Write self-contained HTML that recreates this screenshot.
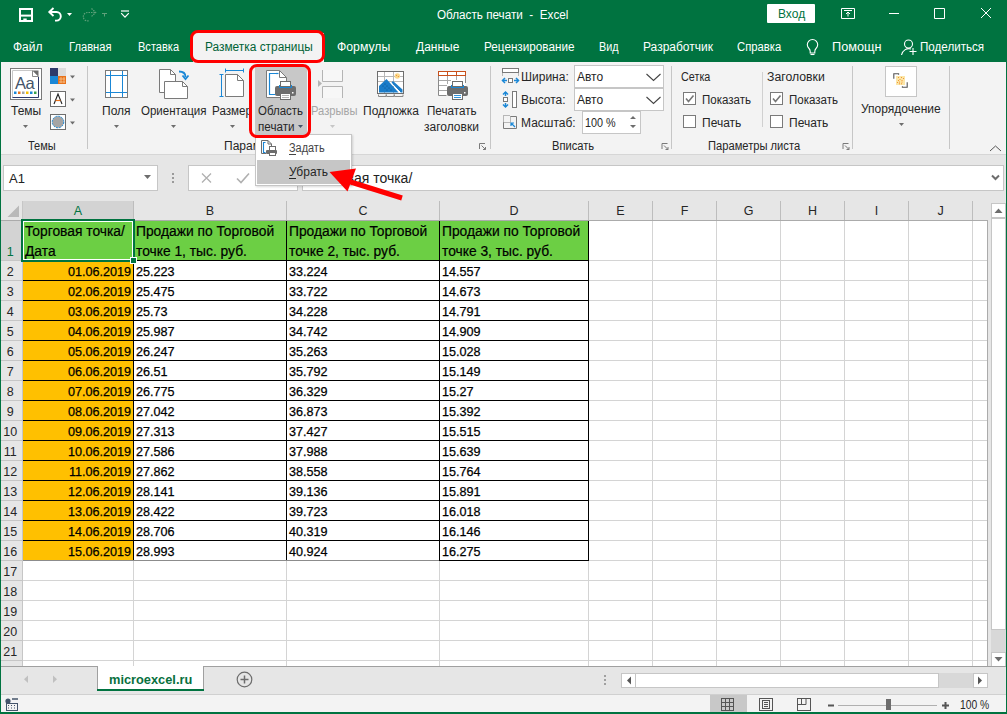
<!DOCTYPE html>
<html><head><meta charset="utf-8">
<style>
*{margin:0;padding:0;box-sizing:border-box}
html,body{width:1007px;height:714px;overflow:hidden;background:#fff}
body{position:relative;font-family:"Liberation Sans",sans-serif;font-size:12px;color:#262626}
.a{position:absolute}
.t{position:absolute;white-space:pre;line-height:1}
.w{color:#fff}
svg{position:absolute;overflow:visible}
</style></head><body>
<!-- title + tabs -->
<div class="a" style="left:0;top:0;width:1007px;height:62px;background:#007340"></div>
<!-- QAT -->
<svg style="left:0;top:0" width="140" height="30">
  <path d="M20 9h12v12h-12z" fill="none" stroke="#fff" stroke-width="2"/>
  <path d="M20 15.6h12" stroke="#fff" stroke-width="2"/>
  <rect x="23.3" y="18.5" width="3.4" height="3" fill="#fff"/>
  <path d="M49 12h7.5a4.3 4.3 0 0 1 0 8.6h-1.5" fill="none" stroke="#fff" stroke-width="1.9"/>
  <path d="M53.5 8l-4.2 4 4.2 4" fill="none" stroke="#fff" stroke-width="1.9"/>
  <path d="M67 13h5l-2.5 3z" fill="#fff"/>
  <g fill="none" stroke="#5fa07a" stroke-width="1.2" stroke-dasharray="1.5 1">
    <path d="M95 12.5h-7.5a4.2 4.2 0 0 0 0 8.4h2"/>
    <path d="M91.5 8.5l4.2 4-4.2 4"/>
  </g>
  <path d="M102 13.5h5M104.5 13.5v3" stroke="#5fa07a" stroke-width="1"/>
  <path d="M121 11h8" stroke="#fff" stroke-width="1.2"/>
  <path d="M121.2 13.2l3.8 4 3.8-4" fill="none" stroke="#fff" stroke-width="1.2"/>
</svg>
<div class="t w" style="left:437px;top:9px;font-size:12px;transform:scaleX(0.975);transform-origin:0 0">Область печати  -  Excel</div>
<!-- Вход -->
<div class="a" style="left:767px;top:4px;width:48px;height:19px;background:#fff;border-radius:1px"></div>
<div class="t" style="left:778px;top:8px;color:#007340">Вход</div>
<!-- window controls -->
<svg style="left:0;top:0" width="1007" height="30">
  <g fill="none" stroke="#fff" stroke-width="1">
    <path d="M841.5 8.5h13v10h-13z"/>
    <path d="M844 10.5h8"/>
    <path d="M848 16.5v-4.5M846 14l2-2 2 2"/>
    <path d="M889 13.5h10"/>
    <path d="M934.5 8.5h10v10h-10z"/>
    <path d="M981 8l10 10M991 8l-10 10"/>
  </g>
</svg>
<!-- tabs -->
<div class="t w" style="left:13px;top:41px">Файл</div>
<div class="t w" style="left:69px;top:41px;transform:scaleX(0.93);transform-origin:0 0">Главная</div>
<div class="t w" style="left:138px;top:41px;transform:scaleX(0.92);transform-origin:0 0">Вставка</div>
<div class="a" style="left:193px;top:33px;width:131px;height:29px;background:#f3f3f3"></div>
<div class="t" style="left:205px;top:41px;color:#006236;transform:scaleX(0.99);transform-origin:0 0">Разметка страницы</div>
<div class="t w" style="left:337px;top:41px;transform:scaleX(1.02);transform-origin:0 0">Формулы</div>
<div class="t w" style="left:416px;top:41px">Данные</div>
<div class="t w" style="left:484px;top:41px;transform:scaleX(0.976);transform-origin:0 0">Рецензирование</div>
<div class="t w" style="left:599px;top:41px;transform:scaleX(0.9);transform-origin:0 0">Вид</div>
<div class="t w" style="left:643px;top:41px">Разработчик</div>
<div class="t w" style="left:737px;top:41px;transform:scaleX(0.94);transform-origin:0 0">Справка</div>
<div class="t w" style="left:832px;top:41px;transform:scaleX(1.06);transform-origin:0 0">Помощн</div>
<div class="t w" style="left:920px;top:41px;transform:scaleX(0.967);transform-origin:0 0">Поделиться</div>
<svg style="left:0;top:30px" width="1007" height="32">
  <g fill="none" stroke="#fff" stroke-width="1.1">
    <path d="M809 18.5a5.2 5.2 0 1 1 7 0c-.8.8-1.2 1.8-1.2 3v1.5h-4.6v-1.5c0-1.2-.4-2.2-1.2-3z"/>
    <path d="M810.5 24.5h4"/>
    <circle cx="908.5" cy="14" r="4"/>
    <path d="M901.5 25a7.5 7.5 0 0 1 9.5-6"/>
    <path d="M913 18v7M909.5 21.5h7"/>
  </g>
</svg>

<!-- RIBBON -->
<div class="a" style="left:1px;top:62px;width:1005px;height:93px;background:#f3f3f3;border-bottom:1px solid #d6d6d6"></div>
<!-- group Темы -->
<svg style="left:0;top:0" width="90" height="155">
  <rect x="10.5" y="68.5" width="31" height="31" fill="#fff" stroke="#7a7a7a"/>
  <path d="M12.5 70.5h20l6 6v21h-26z" fill="#fff" stroke="#c8c8c8"/>
  <path d="M38.5 77v20.5h-26" fill="none" stroke="#2e3a6b"/>
  <path d="M32.5 70.5h6v6z" fill="#6d6d6d"/>
  <path d="M32.5 70.5v6h6" fill="none" stroke="#8a8a8a"/>
  <text x="15" y="88.5" font-family="Liberation Sans" font-size="16.5" fill="#44546a" letter-spacing="-.5">Aa</text>
  <rect x="14" y="91.5" width="2.5" height="2.5" fill="#1a87d6"/><rect x="18" y="91.5" width="2.5" height="2.5" fill="#e8721b"/>
  <rect x="22" y="91.5" width="2.5" height="2.5" fill="#a5a5a5"/><rect x="26" y="91.5" width="2.5" height="2.5" fill="#f5be00"/>
  <rect x="30" y="91.5" width="2.5" height="2.5" fill="#1a87d6"/><rect x="34" y="91.5" width="2.5" height="2.5" fill="#3aa24a"/>
  <!-- colors -->
  <rect x="50" y="68" width="8" height="8" fill="#2e3a6b"/><rect x="58" y="68" width="8" height="8" fill="#dcdcdc"/>
  <rect x="50" y="76" width="8" height="8" fill="#1a87d6"/><rect x="58" y="76" width="8" height="8" fill="#e8721b"/>
  <path d="M59 79h6M59 82h6M61 77v6M64 77v6" stroke="#f7c58f" stroke-width=".8"/>
  <!-- fonts -->
  <rect x="50.5" y="91.5" width="15" height="15" fill="#fff" stroke="#6d6d6d"/>
  <path d="M54 104l4-10 4 10" fill="none" stroke="#222" stroke-width="1.1"/>
  <path d="M55.5 100.5h5" stroke="#e8721b" stroke-width="1.2"/>
  <!-- effects -->
  <rect x="50.5" y="114.5" width="15" height="15" fill="#fff" stroke="#6d6d6d"/>
  <circle cx="58" cy="122" r="5.8" fill="#a5a5a5" stroke="#1a87d6" stroke-dasharray="2 1"/>
  <g fill="#6d6d6d">
    <path d="M70 75.5h5l-2.5 3z"/><path d="M70 98.5h5l-2.5 3z"/><path d="M70 121.5h5l-2.5 3z"/>
    <path d="M23 125h5l-2.5 3z"/>
  </g>
  <rect x="87" y="66" width="1" height="83" fill="#c6c6c6"/>
</svg>
<div class="t" style="left:11px;top:105px">Темы</div>
<div class="t" style="left:28px;top:140px;transform:scaleX(0.92);transform-origin:0 0">Темы</div>

<!-- group Параметры страницы -->
<svg style="left:0;top:0" width="500" height="155">
  <!-- Поля -->
  <rect x="105.5" y="70.5" width="22" height="27" fill="#fff" stroke="#7a7a7a"/>
  <path d="M110.5 71v26M122.5 71v26M106 75.5h21M106 92.5h21" stroke="#1a87d6"/>
  <!-- Ориентация -->
  <path d="M159.5 69.5h11l5 5v18h-16z" fill="#fff" stroke="#7a7a7a"/>
  <path d="M164.5 81.5h18l5 5v12h-23z" fill="#fff" stroke="#7a7a7a"/>
  <path d="M182.5 81.5v5h5" fill="none" stroke="#7a7a7a"/>
  <path d="M170.5 69.5v5h5" fill="none" stroke="#7a7a7a"/>
  <path d="M179 71.5c4 0 6.5 1.5 6.5 5.5" fill="none" stroke="#1a87d6" stroke-width="1.8"/>
  <path d="M182.5 75.5l3 3.5 3-3.5" fill="none" stroke="#1a87d6" stroke-width="1.8"/>
  <!-- Размер -->
  <path d="M225.5 74.5h12l6 6v16h-18z" fill="#fff" stroke="#7a7a7a"/>
  <path d="M237.5 74.5v6h6" fill="none" stroke="#7a7a7a"/>
  <path d="M225 70.5h19M225.5 68.5v4M243.5 68.5v4M221.5 74v23M219.5 74.5h4M219.5 96.5h4" stroke="#1a87d6"/>
  <g fill="#6d6d6d"><path d="M114 125h5l-2.5 3z"/><path d="M171 125h5l-2.5 3z"/><path d="M230 125h5l-2.5 3z"/></g>
</svg>
<div class="t" style="left:102px;top:105px">Поля</div>
<div class="t" style="left:141px;top:105px;transform:scaleX(0.96);transform-origin:0 0">Ориентация</div>
<div class="t" style="left:212px;top:105px;transform:scaleX(0.97);transform-origin:0 0">Размер</div>
<div class="t" style="left:224px;top:140px">Параметры страницы</div>
<!-- Область печати pressed -->
<div class="a" style="left:255px;top:67px;width:52px;height:67px;background:#c8c8c8"></div>
<svg style="left:0;top:0" width="500" height="155">
  <path d="M266.5 70.5h13l7 7v20h-20z" fill="#fff" stroke="#7a7a7a"/>
  <path d="M279.5 70.5v7h7" fill="none" stroke="#7a7a7a"/>
  <path d="M276 73.5h-6.5v21h6" fill="none" stroke="#1a87d6" stroke-width="1.2"/>
  <path d="M276 73.5h2.5" stroke="#1a87d6" stroke-width="1.2"/>
  <rect x="275" y="86" width="21" height="10" rx="2" fill="#6d6d6d"/>
  <rect x="279" y="85" width="13" height="3" fill="#1a87d6"/>
  <rect x="280.5" y="81.5" width="10" height="5" fill="#fff" stroke="#6d6d6d"/>
  <rect x="280.5" y="93.5" width="10" height="6" fill="#fff" stroke="#6d6d6d"/>
  <path d="M282 95.5h7M282 97.5h7" stroke="#a0a0a0" stroke-width=".8"/>
  <rect x="292" y="92" width="1.5" height="1.5" fill="#fff"/>
  <path d="M298 125h5l-2.5 3z" fill="#44546a"/>
  <!-- Разрывы disabled -->
  <rect x="323" y="70" width="19" height="11.5" fill="#f7f7f7"/>
  <rect x="323" y="87" width="19" height="11" fill="#f7f7f7"/>
  <path d="M322.5 70v11.5h20v-11.5M322.5 98v-11.5h20v11.5" fill="none" stroke="#b4b4b4"/>
  <path d="M318 80v7l4-3.5z" fill="#b4b4b4"/>
  <path d="M330 125h5l-2.5 3z" fill="#c6c6c6"/>
  <!-- Подложка -->
  <rect x="377.5" y="71.5" width="26" height="22" fill="#fff"/>
  <path d="M378 76.5h25M378 81.5h25M384.5 72v21M393.5 72v21" stroke="#b8b8b8"/>
  <rect x="377.5" y="71.5" width="26" height="22" fill="none" stroke="#6d6d6d"/>
  <path d="M378.5 94.5v2h7.5v-2M386.5 94.5v2h7.5v-2M394.5 94.5v2h8.5v-2" fill="none" stroke="#8a8a8a"/>
  <path d="M379 92.5v-6.5l7.5-7 12 13.5z" fill="#1a7cc9"/>
  <path d="M391.5 82.5l1.5-1.5 9.5 8.5v3h-2z" fill="#1a7cc9"/>
  <path d="M390 82l10.5 10.5" stroke="#fff" stroke-width="1"/>
  <g fill="#0d4f86"><circle cx="383" cy="86" r=".6"/><circle cx="385" cy="84" r=".6"/><circle cx="387" cy="86" r=".6"/><circle cx="385" cy="88" r=".6"/><circle cx="389" cy="88" r=".6"/><circle cx="391" cy="90" r=".6"/><circle cx="387" cy="90" r=".6"/></g>
  <circle cx="397.3" cy="76" r="2.7" fill="#fbd98a"/>
  <g fill="#e8721b"><circle cx="396.5" cy="75.3" r=".5"/><circle cx="398.3" cy="76.5" r=".5"/></g>
  <!-- Печатать заголовки -->
  <rect x="438.5" y="71.5" width="27" height="24" fill="#fff"/>
  <path d="M438.5 75v20.5h8M465.5 75v8M439 80.5h12M439 85.5h8M439 90.5h8M447.5 75v9M456.5 75v5" fill="none" stroke="#8a8a8a"/>
  <path d="M439 80.5h12M439 85.5h8M439 90.5h8M447.5 75v9M456.5 75v5" fill="none" stroke="#a8a8a8"/>
  <rect x="438.5" y="71.5" width="27" height="4" fill="#fff" stroke="#c8501b"/>
  <path d="M447.5 71.5v4M456.5 71.5v4" stroke="#c8501b"/>
  <rect x="447" y="86" width="21" height="10" rx="2" fill="#6d6d6d"/>
  <rect x="451" y="85" width="13" height="3" fill="#1a87d6"/>
  <rect x="452.5" y="81.5" width="10" height="5" fill="#fff" stroke="#6d6d6d"/>
  <rect x="452.5" y="93.5" width="10" height="6" fill="#fff" stroke="#6d6d6d"/>
  <path d="M454 95.5h7M454 97.5h7" stroke="#1a87d6" stroke-width=".9"/>
  <rect x="464" y="92" width="1.5" height="1.5" fill="#fff"/>
  <!-- launcher -->
  <path d="M479.5 149v-5.5h5.5M481.5 145.5l4 4M483 149.5h2.5v-2.5" fill="none" stroke="#7a7a7a"/>
  <rect x="490" y="66" width="1" height="83" fill="#c6c6c6"/>
</svg>
<div class="t" style="left:258px;top:105px;transform:scaleX(0.955);transform-origin:0 0">Область</div>
<div class="t" style="left:258px;top:121px;transform:scaleX(0.97);transform-origin:0 0">печати</div>
<div class="t" style="left:311px;top:105px;color:#a6a6a6;transform:scaleX(0.93);transform-origin:0 0">Разрывы</div>
<div class="t" style="left:363px;top:105px">Подложка</div>
<div class="t" style="left:427px;top:105px;transform:scaleX(0.97);transform-origin:0 0">Печатать</div>
<div class="t" style="left:424px;top:121px">заголовки</div>

<!-- group Вписать -->
<svg style="left:0;top:0" width="1007" height="155">
  <!-- width icon -->
  <rect x="502.5" y="68.5" width="16" height="4" fill="#fff" stroke="#7a7a7a"/>
  <path d="M502.5 72.5v3M518.5 72.5v3" stroke="#7a7a7a" stroke-dasharray="1 1"/>
  <path d="M503 80.5h4M514 80.5h4" stroke="#1a87d6" stroke-width="1.5"/>
  <path d="M505 78l-2.5 2.5 2.5 2.5M516 78l2.5 2.5-2.5 2.5" fill="none" stroke="#1a87d6" stroke-width="1.5"/>
  <rect x="508.5" y="78.5" width="4" height="4" fill="#fff" stroke="#7a7a7a"/>
  <!-- height icon -->
  <rect x="512.5" y="91.5" width="4" height="16" fill="#fff" stroke="#7a7a7a"/>
  <path d="M505.5 92v4M505.5 103v4" stroke="#1a87d6" stroke-width="1.5"/>
  <path d="M503 94.5l2.5-2.5 2.5 2.5M503 104.5l2.5 2.5 2.5-2.5" fill="none" stroke="#1a87d6" stroke-width="1.5"/>
  <rect x="503.5" y="97.5" width="4" height="4" fill="#fff" stroke="#7a7a7a"/>
  <!-- scale icon -->
  <path d="M503.5 122.5v-7h7" fill="none" stroke="#7a7a7a" stroke-dasharray="1 1"/>
  <path d="M503.5 122.5h7v-7" fill="none" stroke="#7a7a7a" stroke-dasharray="1 1"/>
  <path d="M510.5 116.5h6v12h-13v-6" fill="none" stroke="#7a7a7a"/>
  <path d="M515 127l-4-4M511 126v-3h3" fill="none" stroke="#1a87d6" stroke-width="1.2"/>
  <!-- combos -->
  <rect x="574.5" y="65.5" width="89" height="22" fill="#fff" stroke="#c6c6c6"/>
  <rect x="574.5" y="88.5" width="89" height="22" fill="#fff" stroke="#c6c6c6"/>
  <path d="M646.5 74l7 6.5 7-6.5M646.5 97l7 6.5 7-6.5" fill="none" stroke="#444" stroke-width="1.1"/>
  <rect x="582.5" y="111.5" width="58" height="22" fill="#fff" stroke="#c6c6c6"/>
  <path d="M630 119l3-3 3 3z M630 125l3 3 3-3z" fill="#6d6d6d"/>
  <path d="M662 149v-5.5h5.5M664 145.5l4 4M665.5 149.5h2.5v-2.5" fill="none" stroke="#7a7a7a"/>
  <rect x="671" y="66" width="1" height="83" fill="#c6c6c6"/>
  <!-- Параметры листа -->
  <rect x="683.5" y="92.5" width="12" height="12" fill="#fff" stroke="#7a7a7a"/>
  <path d="M686 98.5l2.5 3 5-6" fill="none" stroke="#777" stroke-width="1.6"/>
  <rect x="683.5" y="115.5" width="12" height="12" fill="#fff" stroke="#7a7a7a"/>
  <rect x="770.5" y="92.5" width="12" height="12" fill="#fff" stroke="#7a7a7a"/>
  <path d="M773 98.5l2.5 3 5-6" fill="none" stroke="#777" stroke-width="1.6"/>
  <rect x="770.5" y="115.5" width="12" height="12" fill="#fff" stroke="#7a7a7a"/>
  <rect x="762" y="72" width="1" height="55" fill="#d0d0d0"/>
  <path d="M843 149v-5.5h5.5M845 145.5l4 4M846.5 149.5h2.5v-2.5" fill="none" stroke="#7a7a7a"/>
  <rect x="852" y="66" width="1" height="83" fill="#c6c6c6"/>
  <!-- Упорядочение -->
  <rect x="885.5" y="66.5" width="31" height="30" fill="#fff" stroke="#c6c6c6"/>
  <path d="M893.8 78.8v-5h4.8v1M907.2 82.2v5h-4.8v-1" fill="none" stroke="#555" stroke-width="1.1"/>
  <rect x="896" y="76" width="9" height="9" fill="#fbe6a8"/>
  <g fill="#f08a24"><circle cx="898.5" cy="77.5" r=".55"/><circle cx="901.5" cy="77.5" r=".55"/><circle cx="903.5" cy="78.5" r=".55"/><circle cx="900" cy="79.5" r=".55"/><circle cx="898.5" cy="80.5" r=".55"/><circle cx="902" cy="80.5" r=".55"/><circle cx="899.5" cy="82" r=".55"/><circle cx="902" cy="82" r=".55"/><circle cx="897.5" cy="82.5" r=".55"/><circle cx="899.5" cy="83.8" r=".55"/><circle cx="901.5" cy="83.8" r=".55"/></g>
  <path d="M899 123h5l-2.5 3z" fill="#6d6d6d"/>
  <rect x="949" y="66" width="1" height="83" fill="#c6c6c6"/>
  <path d="M990 151l5.5-5 5.5 5" fill="none" stroke="#555" stroke-width="1"/>
</svg>
<div class="t" style="left:521px;top:71px">Ширина:</div>
<div class="t" style="left:521px;top:94px">Высота:</div>
<div class="t" style="left:521px;top:117px">Масштаб:</div>
<div class="t" style="left:577px;top:71px">Авто</div>
<div class="t" style="left:577px;top:94px">Авто</div>
<div class="t" style="left:585px;top:117px;transform:scaleX(.9);transform-origin:0 0">100 %</div>
<div class="t" style="left:552px;top:140px;transform:scaleX(0.93);transform-origin:0 0">Вписать</div>
<div class="t" style="left:681px;top:71px;transform:scaleX(0.9);transform-origin:0 0">Сетка</div>
<div class="t" style="left:767px;top:71px;transform:scaleX(1.02);transform-origin:0 0">Заголовки</div>
<div class="t" style="left:702px;top:94px;transform:scaleX(0.96);transform-origin:0 0">Показать</div>
<div class="t" style="left:702px;top:117px">Печать</div>
<div class="t" style="left:789px;top:94px;transform:scaleX(0.96);transform-origin:0 0">Показать</div>
<div class="t" style="left:789px;top:117px">Печать</div>
<div class="t" style="left:708px;top:140px;transform:scaleX(0.93);transform-origin:0 0">Параметры листа</div>
<div class="t" style="left:861px;top:103px">Упорядочение</div>


<!-- FORMULA BAR -->
<div class="a" style="left:1px;top:155px;width:1005px;height:66px;background:#e6e6e6"></div>
<div id="fbar"></div>

<!-- GRID -->
<div id="grid"><div class="a" style="left:3px;top:165px;width:155px;height:26px;background:#fff;border:1px solid #c6c6c6"></div>
<div class="t" style="left:9px;top:172px;font-size:13px;color:#222">A1</div>
<svg style="left:0;top:150px" width="1007" height="50">
 <path d="M144 25h7l-3.5 4z" fill="#6d6d6d"/>
 <rect x="172" y="23" width="2" height="2" fill="#9a9a9a"/><rect x="172" y="27" width="2" height="2" fill="#9a9a9a"/><rect x="172" y="31" width="2" height="2" fill="#9a9a9a"/>
 <path d="M202 23.5l9 9M211 23.5l-9 9" stroke="#b0b0b0" stroke-width="1.3"/>
 <path d="M237 28.5l4 4 8-9" fill="none" stroke="#b0b0b0" stroke-width="1.6"/>
 <path d="M992 25.5l3.5 3.5 3.5-3.5" fill="none" stroke="#6d6d6d" stroke-width="2"/>
</svg>

<div class="a" style="left:188px;top:165px;width:110px;height:26px;background:#fff;border:1px solid #c6c6c6"></div>
<div class="a" style="left:302px;top:165px;width:702px;height:26px;background:#fff;border:1px solid #c6c6c6"></div>
<div class="t" style="left:311px;top:171px;font-size:14px;color:#222">Торговая точка/</div>
<svg style="left:0;top:150px" width="1007" height="50"><path d="M992 25.5l3.5 3.5 3.5-3.5" fill="none" stroke="#6d6d6d" stroke-width="2"/><path d="M202 23.5l9 9M211 23.5l-9 9" stroke="#b0b0b0" stroke-width="1.3"/><path d="M237 28.5l4 4 8-9" fill="none" stroke="#b0b0b0" stroke-width="1.6"/></svg>
<div class="a" style="left:1px;top:201px;width:987px;height:20px;background:#e6e6e6"></div>
<svg style="left:0;top:0" width="30" height="230"><path d="M19 205.5v11.5h-11.5z" fill="#b9b9b9"/></svg>
<div class="a" style="left:23px;top:201px;width:110px;height:19px;background:#d3d3d3"></div>
<div class="a" style="left:23px;top:221px;width:964px;height:445px;background:#fff"></div>
<div class="a" style="left:1px;top:221px;width:21px;height:445px;background:#e6e6e6"></div>
<div class="a" style="left:1px;top:221px;width:21px;height:39px;background:#d3d3d3"></div>
<svg style="left:0;top:0" width="1007" height="714"><rect x="133" y="221" width="1" height="445" fill="#d4d4d4"/><rect x="286" y="221" width="1" height="445" fill="#d4d4d4"/><rect x="439" y="221" width="1" height="445" fill="#d4d4d4"/><rect x="588" y="221" width="1" height="445" fill="#d4d4d4"/><rect x="652" y="221" width="1" height="445" fill="#d4d4d4"/><rect x="716" y="221" width="1" height="445" fill="#d4d4d4"/><rect x="780" y="221" width="1" height="445" fill="#d4d4d4"/><rect x="844" y="221" width="1" height="445" fill="#d4d4d4"/><rect x="908" y="221" width="1" height="445" fill="#d4d4d4"/><rect x="972" y="221" width="1" height="445" fill="#d4d4d4"/><rect x="23" y="260" width="964" height="1" fill="#d4d4d4"/><rect x="23" y="280" width="964" height="1" fill="#d4d4d4"/><rect x="23" y="300" width="964" height="1" fill="#d4d4d4"/><rect x="23" y="320" width="964" height="1" fill="#d4d4d4"/><rect x="23" y="340" width="964" height="1" fill="#d4d4d4"/><rect x="23" y="360" width="964" height="1" fill="#d4d4d4"/><rect x="23" y="380" width="964" height="1" fill="#d4d4d4"/><rect x="23" y="400" width="964" height="1" fill="#d4d4d4"/><rect x="23" y="420" width="964" height="1" fill="#d4d4d4"/><rect x="23" y="440" width="964" height="1" fill="#d4d4d4"/><rect x="23" y="460" width="964" height="1" fill="#d4d4d4"/><rect x="23" y="480" width="964" height="1" fill="#d4d4d4"/><rect x="23" y="500" width="964" height="1" fill="#d4d4d4"/><rect x="23" y="520" width="964" height="1" fill="#d4d4d4"/><rect x="23" y="540" width="964" height="1" fill="#d4d4d4"/><rect x="23" y="560" width="964" height="1" fill="#d4d4d4"/><rect x="23" y="580" width="964" height="1" fill="#d4d4d4"/><rect x="23" y="600" width="964" height="1" fill="#d4d4d4"/><rect x="23" y="620" width="964" height="1" fill="#d4d4d4"/><rect x="23" y="640" width="964" height="1" fill="#d4d4d4"/><rect x="23" y="660" width="964" height="1" fill="#d4d4d4"/><rect x="23" y="680" width="964" height="1" fill="#d4d4d4"/><rect x="22" y="201" width="1" height="19" fill="#bdbdbd"/><rect x="133" y="201" width="1" height="19" fill="#bdbdbd"/><rect x="286" y="201" width="1" height="19" fill="#bdbdbd"/><rect x="439" y="201" width="1" height="19" fill="#bdbdbd"/><rect x="588" y="201" width="1" height="19" fill="#bdbdbd"/><rect x="652" y="201" width="1" height="19" fill="#bdbdbd"/><rect x="716" y="201" width="1" height="19" fill="#bdbdbd"/><rect x="780" y="201" width="1" height="19" fill="#bdbdbd"/><rect x="844" y="201" width="1" height="19" fill="#bdbdbd"/><rect x="908" y="201" width="1" height="19" fill="#bdbdbd"/><rect x="972" y="201" width="1" height="19" fill="#bdbdbd"/><rect x="1" y="260" width="21" height="1" fill="#c6c6c6"/><rect x="1" y="280" width="21" height="1" fill="#c6c6c6"/><rect x="1" y="300" width="21" height="1" fill="#c6c6c6"/><rect x="1" y="320" width="21" height="1" fill="#c6c6c6"/><rect x="1" y="340" width="21" height="1" fill="#c6c6c6"/><rect x="1" y="360" width="21" height="1" fill="#c6c6c6"/><rect x="1" y="380" width="21" height="1" fill="#c6c6c6"/><rect x="1" y="400" width="21" height="1" fill="#c6c6c6"/><rect x="1" y="420" width="21" height="1" fill="#c6c6c6"/><rect x="1" y="440" width="21" height="1" fill="#c6c6c6"/><rect x="1" y="460" width="21" height="1" fill="#c6c6c6"/><rect x="1" y="480" width="21" height="1" fill="#c6c6c6"/><rect x="1" y="500" width="21" height="1" fill="#c6c6c6"/><rect x="1" y="520" width="21" height="1" fill="#c6c6c6"/><rect x="1" y="540" width="21" height="1" fill="#c6c6c6"/><rect x="1" y="560" width="21" height="1" fill="#c6c6c6"/><rect x="1" y="580" width="21" height="1" fill="#c6c6c6"/><rect x="1" y="600" width="21" height="1" fill="#c6c6c6"/><rect x="1" y="620" width="21" height="1" fill="#c6c6c6"/><rect x="1" y="640" width="21" height="1" fill="#c6c6c6"/><rect x="1" y="660" width="21" height="1" fill="#c6c6c6"/><rect x="1" y="680" width="21" height="1" fill="#c6c6c6"/><rect x="1" y="220" width="987" height="1" fill="#ababab"/><rect x="22" y="201" width="1" height="465" fill="#c6c6c6"/><rect x="987" y="220" width="1" height="447" fill="#ababab"/><rect x="1" y="666" width="987" height="1" fill="#ababab"/></svg>
<div class="t" style="left:58.0px;width:40px;text-align:center;top:205px;font-size:12.5px;color:#007340">A</div>
<div class="t" style="left:190.0px;width:40px;text-align:center;top:205px;font-size:12.5px;color:#262626">B</div>
<div class="t" style="left:343.0px;width:40px;text-align:center;top:205px;font-size:12.5px;color:#262626">C</div>
<div class="t" style="left:494.0px;width:40px;text-align:center;top:205px;font-size:12.5px;color:#262626">D</div>
<div class="t" style="left:600.5px;width:40px;text-align:center;top:205px;font-size:12.5px;color:#262626">E</div>
<div class="t" style="left:664.5px;width:40px;text-align:center;top:205px;font-size:12.5px;color:#262626">F</div>
<div class="t" style="left:728.5px;width:40px;text-align:center;top:205px;font-size:12.5px;color:#262626">G</div>
<div class="t" style="left:792.5px;width:40px;text-align:center;top:205px;font-size:12.5px;color:#262626">H</div>
<div class="t" style="left:856.5px;width:40px;text-align:center;top:205px;font-size:12.5px;color:#262626">I</div>
<div class="t" style="left:920.5px;width:40px;text-align:center;top:205px;font-size:12.5px;color:#262626">J</div>
<div class="t" style="left:0px;width:20.5px;text-align:center;top:245.5px;font-size:12.5px;color:#007340">1</div>
<div class="t" style="left:0px;width:20.5px;text-align:center;top:265.5px;font-size:12.5px;color:#262626">2</div>
<div class="t" style="left:0px;width:20.5px;text-align:center;top:285.5px;font-size:12.5px;color:#262626">3</div>
<div class="t" style="left:0px;width:20.5px;text-align:center;top:305.5px;font-size:12.5px;color:#262626">4</div>
<div class="t" style="left:0px;width:20.5px;text-align:center;top:325.5px;font-size:12.5px;color:#262626">5</div>
<div class="t" style="left:0px;width:20.5px;text-align:center;top:345.5px;font-size:12.5px;color:#262626">6</div>
<div class="t" style="left:0px;width:20.5px;text-align:center;top:365.5px;font-size:12.5px;color:#262626">7</div>
<div class="t" style="left:0px;width:20.5px;text-align:center;top:385.5px;font-size:12.5px;color:#262626">8</div>
<div class="t" style="left:0px;width:20.5px;text-align:center;top:405.5px;font-size:12.5px;color:#262626">9</div>
<div class="t" style="left:0px;width:20.5px;text-align:center;top:425.5px;font-size:12.5px;color:#262626">10</div>
<div class="t" style="left:0px;width:20.5px;text-align:center;top:445.5px;font-size:12.5px;color:#262626">11</div>
<div class="t" style="left:0px;width:20.5px;text-align:center;top:465.5px;font-size:12.5px;color:#262626">12</div>
<div class="t" style="left:0px;width:20.5px;text-align:center;top:485.5px;font-size:12.5px;color:#262626">13</div>
<div class="t" style="left:0px;width:20.5px;text-align:center;top:505.5px;font-size:12.5px;color:#262626">14</div>
<div class="t" style="left:0px;width:20.5px;text-align:center;top:525.5px;font-size:12.5px;color:#262626">15</div>
<div class="t" style="left:0px;width:20.5px;text-align:center;top:545.5px;font-size:12.5px;color:#262626">16</div>
<div class="t" style="left:0px;width:20.5px;text-align:center;top:565.5px;font-size:12.5px;color:#262626">17</div>
<div class="t" style="left:0px;width:20.5px;text-align:center;top:585.5px;font-size:12.5px;color:#262626">18</div>
<div class="t" style="left:0px;width:20.5px;text-align:center;top:605.5px;font-size:12.5px;color:#262626">19</div>
<div class="t" style="left:0px;width:20.5px;text-align:center;top:625.5px;font-size:12.5px;color:#262626">20</div>
<div class="t" style="left:0px;width:20.5px;text-align:center;top:645.5px;font-size:12.5px;color:#262626">21</div>
<div class="a" style="left:23px;top:221px;width:565px;height:39px;background:#6ccf44"></div>
<div class="a" style="left:23px;top:261px;width:110px;height:299px;background:#ffc000"></div>
<svg style="left:0;top:0" width="1007" height="714"><rect x="133" y="221" width="1" height="340" fill="#000"/><rect x="286" y="221" width="1" height="340" fill="#000"/><rect x="439" y="221" width="1" height="340" fill="#000"/><rect x="588" y="221" width="1" height="340" fill="#000"/><rect x="23" y="260" width="566" height="1" fill="#000"/><rect x="23" y="280" width="566" height="1" fill="#000"/><rect x="23" y="300" width="566" height="1" fill="#000"/><rect x="23" y="320" width="566" height="1" fill="#000"/><rect x="23" y="340" width="566" height="1" fill="#000"/><rect x="23" y="360" width="566" height="1" fill="#000"/><rect x="23" y="380" width="566" height="1" fill="#000"/><rect x="23" y="400" width="566" height="1" fill="#000"/><rect x="23" y="420" width="566" height="1" fill="#000"/><rect x="23" y="440" width="566" height="1" fill="#000"/><rect x="23" y="460" width="566" height="1" fill="#000"/><rect x="23" y="480" width="566" height="1" fill="#000"/><rect x="23" y="500" width="566" height="1" fill="#000"/><rect x="23" y="520" width="566" height="1" fill="#000"/><rect x="23" y="540" width="566" height="1" fill="#000"/><rect x="23" y="560" width="416" height="1" fill="#8c8c8c"/><rect x="439" y="560" width="150" height="1" fill="#000"/></svg>
<div class="t" style="left:25px;top:225px;font-size:13.8px;color:#000;-webkit-text-stroke:.2px #000">Торговая точка/</div>
<div class="t" style="left:25px;top:245px;font-size:13.8px;color:#000;-webkit-text-stroke:.2px #000">Дата</div>
<div class="t" style="left:136px;top:225px;font-size:13.8px;color:#000;-webkit-text-stroke:.2px #000">Продажи по Торговой</div>
<div class="t" style="left:289px;top:225px;font-size:13.8px;color:#000;-webkit-text-stroke:.2px #000">Продажи по Торговой</div>
<div class="t" style="left:442px;top:225px;font-size:13.8px;color:#000;-webkit-text-stroke:.2px #000">Продажи по Торговой</div>
<div class="t" style="left:136px;top:245px;font-size:13.8px;color:#000;-webkit-text-stroke:.2px #000">точке 1, тыс. руб.</div>
<div class="t" style="left:289px;top:245px;font-size:13.8px;color:#000;-webkit-text-stroke:.2px #000">точке 2, тыс. руб.</div>
<div class="t" style="left:442px;top:245px;font-size:13.8px;color:#000;-webkit-text-stroke:.2px #000">точке 3, тыс. руб.</div>
<div class="t" style="left:33px;width:98px;text-align:right;top:265.7px;font-size:12.6px;color:#000;-webkit-text-stroke:.25px #000">01.06.2019</div>
<div class="t" style="left:136px;top:265.7px;font-size:12.6px;color:#000;-webkit-text-stroke:.25px #000">25.223</div>
<div class="t" style="left:289px;top:265.7px;font-size:12.6px;color:#000;-webkit-text-stroke:.25px #000">33.224</div>
<div class="t" style="left:442px;top:265.7px;font-size:12.6px;color:#000;-webkit-text-stroke:.25px #000">14.557</div>
<div class="t" style="left:33px;width:98px;text-align:right;top:285.7px;font-size:12.6px;color:#000;-webkit-text-stroke:.25px #000">02.06.2019</div>
<div class="t" style="left:136px;top:285.7px;font-size:12.6px;color:#000;-webkit-text-stroke:.25px #000">25.475</div>
<div class="t" style="left:289px;top:285.7px;font-size:12.6px;color:#000;-webkit-text-stroke:.25px #000">33.722</div>
<div class="t" style="left:442px;top:285.7px;font-size:12.6px;color:#000;-webkit-text-stroke:.25px #000">14.673</div>
<div class="t" style="left:33px;width:98px;text-align:right;top:305.7px;font-size:12.6px;color:#000;-webkit-text-stroke:.25px #000">03.06.2019</div>
<div class="t" style="left:136px;top:305.7px;font-size:12.6px;color:#000;-webkit-text-stroke:.25px #000">25.73</div>
<div class="t" style="left:289px;top:305.7px;font-size:12.6px;color:#000;-webkit-text-stroke:.25px #000">34.228</div>
<div class="t" style="left:442px;top:305.7px;font-size:12.6px;color:#000;-webkit-text-stroke:.25px #000">14.791</div>
<div class="t" style="left:33px;width:98px;text-align:right;top:325.7px;font-size:12.6px;color:#000;-webkit-text-stroke:.25px #000">04.06.2019</div>
<div class="t" style="left:136px;top:325.7px;font-size:12.6px;color:#000;-webkit-text-stroke:.25px #000">25.987</div>
<div class="t" style="left:289px;top:325.7px;font-size:12.6px;color:#000;-webkit-text-stroke:.25px #000">34.742</div>
<div class="t" style="left:442px;top:325.7px;font-size:12.6px;color:#000;-webkit-text-stroke:.25px #000">14.909</div>
<div class="t" style="left:33px;width:98px;text-align:right;top:345.7px;font-size:12.6px;color:#000;-webkit-text-stroke:.25px #000">05.06.2019</div>
<div class="t" style="left:136px;top:345.7px;font-size:12.6px;color:#000;-webkit-text-stroke:.25px #000">26.247</div>
<div class="t" style="left:289px;top:345.7px;font-size:12.6px;color:#000;-webkit-text-stroke:.25px #000">35.263</div>
<div class="t" style="left:442px;top:345.7px;font-size:12.6px;color:#000;-webkit-text-stroke:.25px #000">15.028</div>
<div class="t" style="left:33px;width:98px;text-align:right;top:365.7px;font-size:12.6px;color:#000;-webkit-text-stroke:.25px #000">06.06.2019</div>
<div class="t" style="left:136px;top:365.7px;font-size:12.6px;color:#000;-webkit-text-stroke:.25px #000">26.51</div>
<div class="t" style="left:289px;top:365.7px;font-size:12.6px;color:#000;-webkit-text-stroke:.25px #000">35.792</div>
<div class="t" style="left:442px;top:365.7px;font-size:12.6px;color:#000;-webkit-text-stroke:.25px #000">15.149</div>
<div class="t" style="left:33px;width:98px;text-align:right;top:385.7px;font-size:12.6px;color:#000;-webkit-text-stroke:.25px #000">07.06.2019</div>
<div class="t" style="left:136px;top:385.7px;font-size:12.6px;color:#000;-webkit-text-stroke:.25px #000">26.775</div>
<div class="t" style="left:289px;top:385.7px;font-size:12.6px;color:#000;-webkit-text-stroke:.25px #000">36.329</div>
<div class="t" style="left:442px;top:385.7px;font-size:12.6px;color:#000;-webkit-text-stroke:.25px #000">15.27</div>
<div class="t" style="left:33px;width:98px;text-align:right;top:405.7px;font-size:12.6px;color:#000;-webkit-text-stroke:.25px #000">08.06.2019</div>
<div class="t" style="left:136px;top:405.7px;font-size:12.6px;color:#000;-webkit-text-stroke:.25px #000">27.042</div>
<div class="t" style="left:289px;top:405.7px;font-size:12.6px;color:#000;-webkit-text-stroke:.25px #000">36.873</div>
<div class="t" style="left:442px;top:405.7px;font-size:12.6px;color:#000;-webkit-text-stroke:.25px #000">15.392</div>
<div class="t" style="left:33px;width:98px;text-align:right;top:425.7px;font-size:12.6px;color:#000;-webkit-text-stroke:.25px #000">09.06.2019</div>
<div class="t" style="left:136px;top:425.7px;font-size:12.6px;color:#000;-webkit-text-stroke:.25px #000">27.313</div>
<div class="t" style="left:289px;top:425.7px;font-size:12.6px;color:#000;-webkit-text-stroke:.25px #000">37.427</div>
<div class="t" style="left:442px;top:425.7px;font-size:12.6px;color:#000;-webkit-text-stroke:.25px #000">15.515</div>
<div class="t" style="left:33px;width:98px;text-align:right;top:445.7px;font-size:12.6px;color:#000;-webkit-text-stroke:.25px #000">10.06.2019</div>
<div class="t" style="left:136px;top:445.7px;font-size:12.6px;color:#000;-webkit-text-stroke:.25px #000">27.586</div>
<div class="t" style="left:289px;top:445.7px;font-size:12.6px;color:#000;-webkit-text-stroke:.25px #000">37.988</div>
<div class="t" style="left:442px;top:445.7px;font-size:12.6px;color:#000;-webkit-text-stroke:.25px #000">15.639</div>
<div class="t" style="left:33px;width:98px;text-align:right;top:465.7px;font-size:12.6px;color:#000;-webkit-text-stroke:.25px #000">11.06.2019</div>
<div class="t" style="left:136px;top:465.7px;font-size:12.6px;color:#000;-webkit-text-stroke:.25px #000">27.862</div>
<div class="t" style="left:289px;top:465.7px;font-size:12.6px;color:#000;-webkit-text-stroke:.25px #000">38.558</div>
<div class="t" style="left:442px;top:465.7px;font-size:12.6px;color:#000;-webkit-text-stroke:.25px #000">15.764</div>
<div class="t" style="left:33px;width:98px;text-align:right;top:485.7px;font-size:12.6px;color:#000;-webkit-text-stroke:.25px #000">12.06.2019</div>
<div class="t" style="left:136px;top:485.7px;font-size:12.6px;color:#000;-webkit-text-stroke:.25px #000">28.141</div>
<div class="t" style="left:289px;top:485.7px;font-size:12.6px;color:#000;-webkit-text-stroke:.25px #000">39.136</div>
<div class="t" style="left:442px;top:485.7px;font-size:12.6px;color:#000;-webkit-text-stroke:.25px #000">15.891</div>
<div class="t" style="left:33px;width:98px;text-align:right;top:505.7px;font-size:12.6px;color:#000;-webkit-text-stroke:.25px #000">13.06.2019</div>
<div class="t" style="left:136px;top:505.7px;font-size:12.6px;color:#000;-webkit-text-stroke:.25px #000">28.422</div>
<div class="t" style="left:289px;top:505.7px;font-size:12.6px;color:#000;-webkit-text-stroke:.25px #000">39.723</div>
<div class="t" style="left:442px;top:505.7px;font-size:12.6px;color:#000;-webkit-text-stroke:.25px #000">16.018</div>
<div class="t" style="left:33px;width:98px;text-align:right;top:525.7px;font-size:12.6px;color:#000;-webkit-text-stroke:.25px #000">14.06.2019</div>
<div class="t" style="left:136px;top:525.7px;font-size:12.6px;color:#000;-webkit-text-stroke:.25px #000">28.706</div>
<div class="t" style="left:289px;top:525.7px;font-size:12.6px;color:#000;-webkit-text-stroke:.25px #000">40.319</div>
<div class="t" style="left:442px;top:525.7px;font-size:12.6px;color:#000;-webkit-text-stroke:.25px #000">16.146</div>
<div class="t" style="left:33px;width:98px;text-align:right;top:545.7px;font-size:12.6px;color:#000;-webkit-text-stroke:.25px #000">15.06.2019</div>
<div class="t" style="left:136px;top:545.7px;font-size:12.6px;color:#000;-webkit-text-stroke:.25px #000">28.993</div>
<div class="t" style="left:289px;top:545.7px;font-size:12.6px;color:#000;-webkit-text-stroke:.25px #000">40.924</div>
<div class="t" style="left:442px;top:545.7px;font-size:12.6px;color:#000;-webkit-text-stroke:.25px #000">16.275</div>
<div class="a" style="left:21px;top:219px;width:114px;height:43px;border:2px solid #007340"></div>
<div class="a" style="left:23px;top:221px;width:110px;height:39px;border:1px solid #fff"></div>
<div class="a" style="left:131px;top:258px;width:5px;height:5px;background:#007340;outline:1px solid #fff"></div>
<div class="a" style="left:988px;top:201px;width:18px;height:466px;background:#e6e6e6"></div>
<div class="a" style="left:991px;top:203px;width:15px;height:15px;background:#fff;border:1px solid #c6c6c6"></div>
<div class="a" style="left:991px;top:218px;width:15px;height:412px;background:#fff;border:1px solid #c6c6c6"></div>
<div class="a" style="left:991px;top:630px;width:15px;height:22px;background:#d8d8d8"></div>
<div class="a" style="left:991px;top:652px;width:15px;height:15px;background:#fff;border:1px solid #c6c6c6"></div>
<svg style="left:0;top:0" width="1007" height="714"><path d="M994.5 213h8l-4-4.5z" fill="#6d6d6d"/><path d="M994.5 657h8l-4 4.5z" fill="#6d6d6d"/></svg>
</div>

<!-- BOTTOM -->
<div id="bottom"><!-- sheet tab bar -->
<div class="a" style="left:1px;top:666px;width:1005px;height:28px;background:#e6e6e6;border-top:1px solid #a0a0a0"></div>
<div class="a" style="left:97px;top:666px;width:107px;height:25px;background:#fff;border-left:1px solid #a0a0a0;border-right:1px solid #a0a0a0"></div>
<div class="a" style="left:97px;top:689px;width:107px;height:2px;background:#007340"></div>
<div class="t" style="left:109px;top:673px;font-size:13px;font-weight:bold;color:#08703e;transform:scaleX(0.985);transform-origin:0 0">microexcel.ru</div>
<svg style="left:0;top:0" width="1007" height="714">
  <path d="M28 675.5v7.5l-4-3.75z" fill="#c0c0c0"/>
  <path d="M53 675.5v7.5l4-3.75z" fill="#c0c0c0"/>
  <circle cx="244.5" cy="679.5" r="7.3" fill="none" stroke="#6d6d6d" stroke-width="1.2"/>
  <path d="M240.5 679.5h8M244.5 675.5v8" stroke="#6d6d6d" stroke-width="1.5"/>
  <rect x="604" y="675" width="2" height="2" fill="#a0a0a0"/><rect x="604" y="679" width="2" height="2" fill="#a0a0a0"/><rect x="604" y="683" width="2" height="2" fill="#a0a0a0"/>
</svg>
<div class="a" style="left:621px;top:673px;width:367px;height:15px;background:#d8d8d8"></div>
<div class="a" style="left:621px;top:673px;width:15px;height:15px;background:#fff;border:1px solid #c6c6c6"></div>
<div class="a" style="left:635px;top:673px;width:304px;height:15px;background:#fff;border:1px solid #c6c6c6"></div>
<div class="a" style="left:973px;top:673px;width:15px;height:15px;background:#fff;border:1px solid #c6c6c6"></div>
<svg style="left:0;top:0" width="1007" height="714">
  <path d="M631 676.5v8l-4-4z" fill="#555"/>
  <path d="M978 676.5v8l4-4z" fill="#555"/>
</svg>
<!-- status bar -->
<div class="a" style="left:1px;top:694px;width:1005px;height:18px;background:#f3f3f3;border-top:1px solid #d0d0d0"></div>
<div class="a" style="left:710px;top:695px;width:37px;height:17px;background:#c8c8c8"></div>
<svg style="left:0;top:0" width="1007" height="714">
  <!-- macro icon -->
  <circle cx="8" cy="701" r="2.6" fill="#44546a"/>
  <path d="M12 699h6" stroke="#44546a" stroke-width="1.5"/>
  <rect x="6.5" y="703.5" width="11" height="7" fill="none" stroke="#44546a"/>
  <path d="M8 705.5h1M11 705.5h1M14 705.5h1M8 708h1M11 708h1M14 708h1" stroke="#44546a"/>
  <!-- normal view -->
  <rect x="721.5" y="698.5" width="12" height="12" fill="none" stroke="#555"/>
  <path d="M725.5 698.5v12M729.5 698.5v12M721.5 702.5h12M721.5 706.5h12" stroke="#555"/>
  <!-- page layout -->
  <rect x="759.5" y="698.5" width="13" height="12" fill="none" stroke="#555"/>
  <rect x="762.5" y="700.5" width="7" height="8" fill="none" stroke="#555"/>
  <path d="M764 702.5h4M764 704.5h4M764 706.5h4" stroke="#555"/>
  <!-- page break -->
  <rect x="797.5" y="698.5" width="13" height="12" fill="none" stroke="#555"/>
  <path d="M797.5 704.5h8.5v-6M801.5 698.5v6" fill="none" stroke="#555"/>
  <!-- zoom -->
  <path d="M828 705.5h6" stroke="#555" stroke-width="2"/>
  <path d="M838 705.5h99" stroke="#b0b0b0"/>
  <rect x="886" y="699" width="5" height="11" fill="#6d6d6d"/>
  <path d="M942 705.5h7M945.5 702v7" stroke="#555" stroke-width="2"/>
</svg>
<div class="t" style="left:960px;top:699px;font-size:12px;color:#262626;transform:scaleX(.86);transform-origin:0 0">100 %</div>
</div>
<div id="overlay"><!-- red tab box -->
<div class="a" style="left:190px;top:30px;width:135px;height:33px;border:3px solid #ff0000;border-radius:8px"></div>
<!-- menu -->
<div class="a" style="left:255px;top:134px;width:97px;height:52px;background:#fff;border:1px solid #c6c6c6;box-shadow:1px 1px 2px rgba(0,0,0,.15)"></div>
<div class="a" style="left:257px;top:160px;width:93px;height:24px;background:#c6c6c6"></div>
<svg style="left:0;top:0" width="500" height="200">
  <path d="M266 153.5h-4.5v-13h6.5l3.5 3.5v2" fill="none" stroke="#6d6d6d"/>
  <path d="M268 140.5v3.5h3.5" fill="none" stroke="#6d6d6d"/>
  <path d="M265.5 142.5h-2v10h2" fill="none" stroke="#1a87d6" stroke-width="1.1"/>
  <rect x="269.5" y="146.5" width="6" height="4" fill="#fff" stroke="#6d6d6d"/>
  <rect x="266" y="150" width="11" height="4" rx="1" fill="#6d6d6d"/>
  <rect x="269.5" y="152.5" width="6" height="3" fill="#fff" stroke="#6d6d6d"/>
</svg>
<div class="t" style="left:289px;top:142px;color:#444;transform:scaleX(0.91);transform-origin:0 0">Задать</div>
<div class="a" style="left:289px;top:154px;width:7px;height:1px;background:#444"></div>
<div class="t" style="left:289px;top:166px;color:#262626">Убрать</div>
<div class="a" style="left:289px;top:178px;width:7px;height:1px;background:#262626"></div>
<!-- red box around button -->
<div class="a" style="left:249px;top:64px;width:62px;height:74px;border:3px solid #ff0000;border-radius:8px"></div>
<!-- arrow -->
<svg style="left:0;top:0" width="1007" height="714">
  <path d="M349 181.5L402 198" stroke="#ff0000" stroke-width="5"/>
  <path d="M329.5 172L356 168.5L347.5 191.5z" fill="#ff0000"/>
</svg>
</div>

<!-- window border -->
<div class="a" style="left:0;top:0;width:1px;height:714px;background:#007340"></div>
<div class="a" style="left:1006px;top:0;width:1px;height:714px;background:#007340"></div>
<div class="a" style="left:0;top:712px;width:1007px;height:2px;background:#007340"></div>
</body></html>
